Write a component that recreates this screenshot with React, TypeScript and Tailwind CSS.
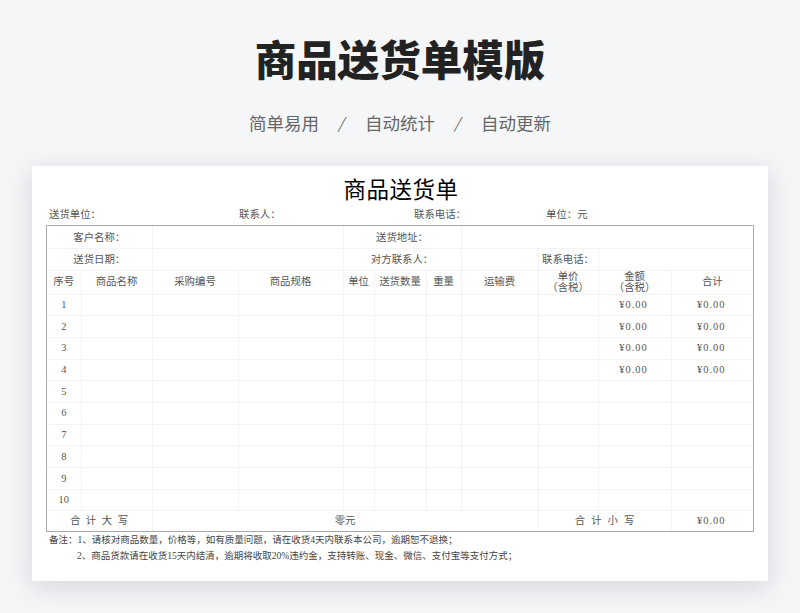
const cols = [34, 71, 86, 105, 31, 52, 35, 77, 60, 73, 82];
const rows = [1, 2, 3, 4, 5, 6, 7, 8, 9, 10];
const cell = "border border-[#f3f3f3] p-0 text-center font-normal align-middle";
const money = cell + " tracking-[1px] pr-[2px]";

function Head({ children }: { children: React.ReactNode }) {
  return <th className={cell + " leading-[11.5px]"}>{children}</th>;
}

export default function App() {
  return (
    <div className="w-[800px] h-[613px] overflow-hidden bg-[#f5f6f8] font-['Noto_Sans_CJK_SC',sans-serif]">
      <h1 className="pt-[28px] h-[94px] text-center text-[41.5px] leading-[60px] font-black text-[#222222]">商品送货单模版</h1>
      <div className="h-[72px] pt-[17px] flex justify-center items-start gap-[19px] text-[17.5px] leading-[24px] text-[#666666]">
        <span>简单易用</span>
        <span className="w-[8px] -translate-x-px text-center text-[15px] italic">/</span>
        <span>自动统计</span>
        <span className="w-[8px] -translate-x-px text-center text-[15px] italic">/</span>
        <span>自动更新</span>
      </div>

      <div className="mx-[32px] h-[415px] bg-white shadow-[0_6px_24px_rgba(90,100,110,0.22)] font-['Liberation_Serif','Noto_Sans_CJK_SC',serif] text-[#555555] text-[10.4px]">
        <div className="h-[39px] pt-[8px] pl-[2px] text-center text-[22.5px] leading-[34px] font-normal text-black tracking-[0.5px]">商品送货单</div>
        <div className="pl-[17px] pt-[3px] h-[20px] grid grid-cols-[190px_175px_132px_1fr] items-start leading-[14px]">
          <span>送货单位：</span>
          <span>联系人：</span>
          <span>联系电话：</span>
          <span>单位：元</span>
        </div>

        <div className="mx-[14px] border border-[#a9a9a9] w-[708px]">
          <table className="w-[706px] table-fixed border-collapse border-hidden">
            <colgroup>
              {cols.map((w, i) => (
                <col key={i} style={{ width: w }} />
              ))}
            </colgroup>
            <tbody>
              <tr className="h-[22.5px]">
                <td colSpan={2} className={cell + " pt-px"}>客户名称：</td>
                <td colSpan={2} className={cell}></td>
                <td colSpan={3} className={cell + " pt-px"}>送货地址：</td>
                <td colSpan={4} className={cell}></td>
              </tr>
              <tr className="h-[21.5px]">
                <td colSpan={2} className={cell + " pt-px"}>送货日期：</td>
                <td colSpan={2} className={cell}></td>
                <td colSpan={3} className={cell + " pt-px"}>对方联系人：</td>
                <td className={cell}></td>
                <td className={cell + " pt-px"}>联系电话：</td>
                <td colSpan={2} className={cell}></td>
              </tr>
              <tr className="h-[24px]">
                <Head>序号</Head>
                <Head>商品名称</Head>
                <Head>采购编号</Head>
                <Head>商品规格</Head>
                <Head>单位</Head>
                <Head>送货数量</Head>
                <Head>重量</Head>
                <Head>运输费</Head>
                <Head>单价<br />（含税）</Head>
                <Head>金额<br />（含税）</Head>
                <Head>合计</Head>
              </tr>
              {rows.map((n) => (
                <tr key={n} className="h-[21.7px]">
                  <td className={cell}>{n}</td>
                  {cols.slice(1, 9).map((_, i) => (
                    <td key={i} className={cell}></td>
                  ))}
                  <td className={money}>{n <= 4 ? "¥0.00" : ""}</td>
                  <td className={money}>{n <= 4 ? "¥0.00" : ""}</td>
                </tr>
              ))}
              <tr className="h-[20px]">
                <td colSpan={2} className={cell + " tracking-[5.5px] pl-[5px]"}>合计大写</td>
                <td colSpan={6} className={cell}>零元</td>
                <td colSpan={2} className={cell + " tracking-[6px] pl-[6px]"}>合计小写</td>
                <td className={money}>¥0.00</td>
              </tr>
            </tbody>
          </table>
        </div>

        <div className="pl-[17px] leading-[16px] text-[9.5px] text-[#444444]">
          <div>备注：1、请核对商品数量，价格等，如有质量问题，请在收货4天内联系本公司，逾期恕不退换；</div>
          <div className="pl-[28px]">2、商品货款请在收货15天内结清，逾期将收取20%违约金，支持转账、现金、微信、支付宝等支付方式；</div>
        </div>
      </div>
    </div>
  );
}
